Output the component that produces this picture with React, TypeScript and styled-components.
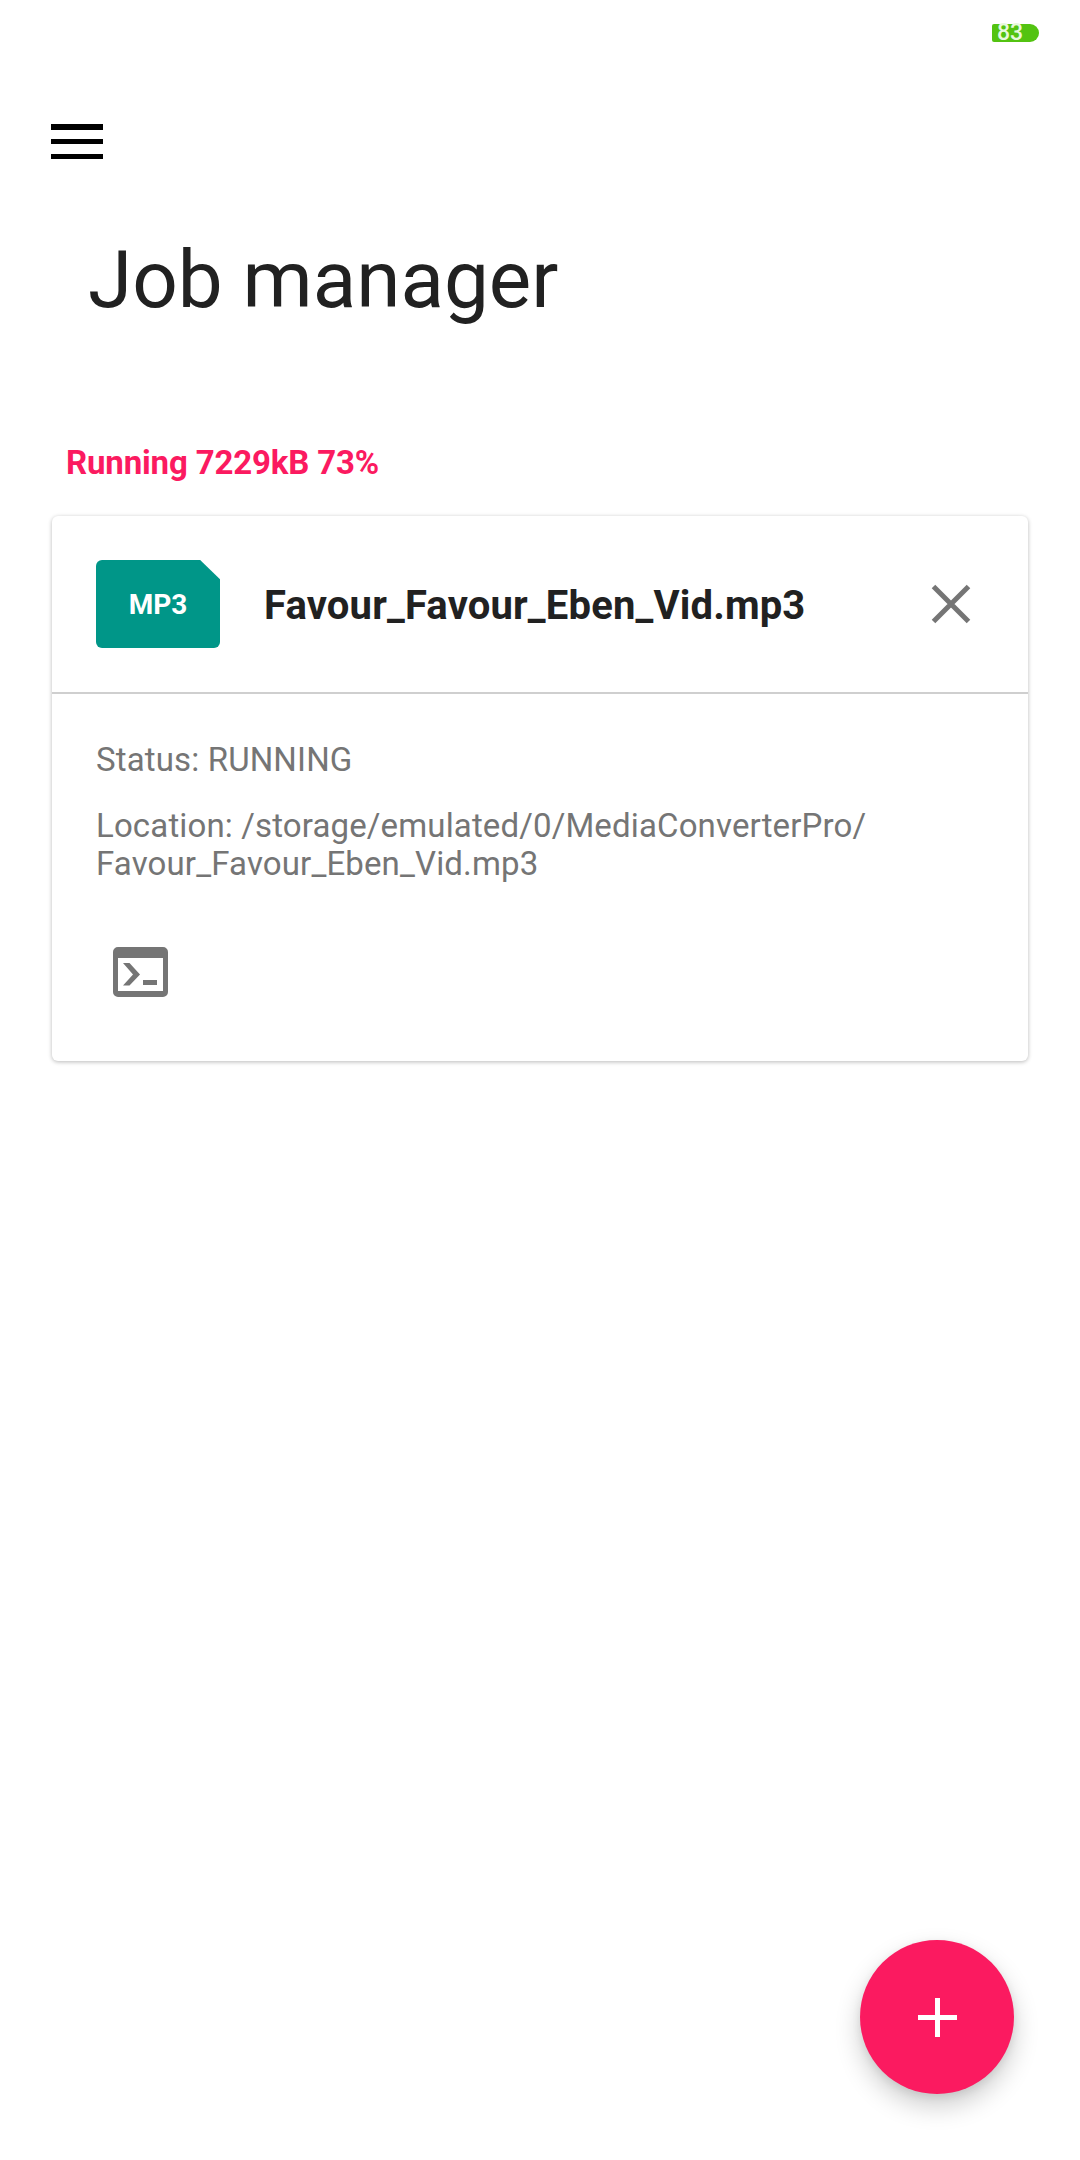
import React from "react";
import styled, { createGlobalStyle } from "styled-components";

const Global = createGlobalStyle`
  html, body { margin: 0; padding: 0; background: #fff; }
  body { font-family: Roboto, "Liberation Sans", sans-serif; }
`;
const Page = styled.div`
  position: relative;
  width: 1080px;
  height: 2160px;
  overflow: hidden;
  background: #fff;
  display: flex;
  flex-direction: column;
`;
const StatusBar = styled.div`
  height: 66px;
  padding-top: 24px;
  padding-right: 41px;
  box-sizing: border-box;
  display: flex;
  justify-content: flex-end;
  align-items: flex-start;
`;
const Battery = styled.div`
  width: 47px;
  height: 18px;
  background: #53c311;
  border-radius: 2px 9px 9px 2px;
  color: #e8f8dc;
  font-size: 23px;
  font-weight: 500;
  line-height: 18px;
  padding-left: 5px;
  box-sizing: border-box;
`;
const MenuButton = styled.div`
  margin: 58px 0 0 51px;
  width: 52px;
  height: 35px;
  display: flex;
  flex-direction: column;
  justify-content: space-between;
`;
const MenuBar = styled.span`
  display: block;
  height: 5.5px;
  background: #000;
`;
const Title = styled.h1`
  margin: 71px 0 0 88px;
  font-size: 80px;
  font-weight: 400;
  line-height: 100px;
  color: #212121;
`;
const Progress = styled.div`
  margin: 114px 0 0 66px;
  font-size: 33px;
  font-weight: 700;
  letter-spacing: -0.15px;
  line-height: 38px;
  color: #fb1a60;
`;
const Card = styled.section`
  margin: 34px 52px 0;
  height: 545px;
  background: #fff;
  border-radius: 6px;
  box-shadow: 0 1px 4px rgba(0, 0, 0, 0.28);
  display: flex;
  flex-direction: column;
`;
const CardHeader = styled.div`
  height: 178px;
  box-sizing: border-box;
  border-bottom: 2px solid #cfcfcf;
  padding: 0 44px;
  display: flex;
  align-items: center;
`;
const FileBadge = styled.div`
  width: 124px;
  height: 88px;
  background: #009688;
  color: #fff;
  border-radius: 6px;
  clip-path: polygon(0 0, 84% 0, 100% 22%, 100% 100%, 0 100%);
  display: flex;
  align-items: center;
  justify-content: center;
  padding-top: 1px;
  box-sizing: border-box;
  font-size: 28px;
  font-weight: 700;
  flex: none;
`;
const FileName = styled.div`
  margin-left: 44px;
  padding-top: 3px;
  flex: 1;
  font-size: 40px;
  font-weight: 700;
  letter-spacing: 0.16px;
  color: #212121;
`;
const CloseIcon = styled.svg`
  width: 52px;
  height: 52px;
  flex: none;
  margin-right: 7px;
  fill: none;
  stroke: #757575;
  stroke-width: 5px;
`;
const CardBody = styled.div`
  padding: 47px 44px 0;
  color: #757575;
  font-size: 33px;
  letter-spacing: 0.14px;
  line-height: 38px;
`;
const Line = styled.div`
  margin-bottom: 28px;
  &:last-of-type { margin-bottom: 0; }
`;
const TerminalIcon = styled.svg`
  display: block;
  width: 55px;
  height: 50px;
  margin: 64px 0 0 17px;
  fill: #757575;
`;
const Fab = styled.button`
  position: absolute;
  left: 860px;
  top: 1940px;
  width: 154px;
  height: 154px;
  padding: 0;
  border: none;
  border-radius: 50%;
  background: #fb1a60;
  box-shadow: 0 12px 26px rgba(0, 0, 0, 0.2), 0 3px 8px rgba(0, 0, 0, 0.08);
  display: flex;
  align-items: center;
  justify-content: center;
`;
const PlusIcon = styled.svg`
  width: 39px;
  height: 39px;
  fill: #fff;
`;

export default function App() {
  return (
    <Page>
      <Global />
      <StatusBar>
        <Battery>83</Battery>
      </StatusBar>
      <MenuButton>
        <MenuBar />
        <MenuBar />
        <MenuBar />
      </MenuButton>
      <Title>Job manager</Title>
      <Progress>Running 7229kB 73%</Progress>
      <Card>
        <CardHeader>
          <FileBadge>MP3</FileBadge>
          <FileName>Favour_Favour_Eben_Vid.mp3</FileName>
          <CloseIcon viewBox="0 0 52 52">
            <path d="M8.5 8.5 L43.5 43.5 M43.5 8.5 L8.5 43.5" />
          </CloseIcon>
        </CardHeader>
        <CardBody>
          <Line>Status: RUNNING</Line>
          <Line>
            Location: /storage/emulated/0/MediaConverterPro/
            <br />
            Favour_Favour_Eben_Vid.mp3
          </Line>
          <TerminalIcon viewBox="0 0 55 50">
            <path
              fillRule="evenodd"
              d="M5 0H50a5 5 0 0 1 5 5V45a5 5 0 0 1-5 5H5a5 5 0 0 1-5-5V5a5 5 0 0 1 5-5zM5 11V44H50V11zM10 16H16.5L27 27.5 16.5 38.5H10L20 27.5zM30 33H44V38H30z"
            />
          </TerminalIcon>
        </CardBody>
      </Card>
      <Fab aria-label="Add">
        <PlusIcon viewBox="0 0 39 39">
          <path d="M17 0h5v17H39v5H22V39h-5V22H0v-5h17z" />
        </PlusIcon>
      </Fab>
    </Page>
  );
}
